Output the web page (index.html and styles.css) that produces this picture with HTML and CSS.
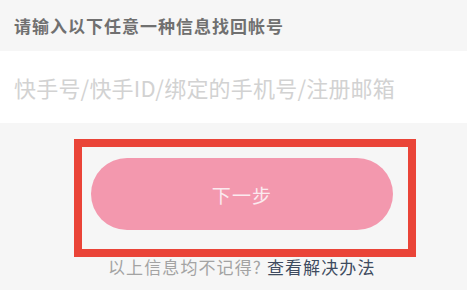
FILE: index.html
```html
<!DOCTYPE html>
<html lang="zh">
<head>
<meta charset="utf-8">
<link rel="stylesheet" href="styles.css">
</head>
<body>
<div class="header">请输入以下任意一种信息找回帐号</div>
<div class="field">快手号/快手ID/绑定的手机号/注册邮箱</div>
<div class="action">
  <div class="btn">下一步</div>
</div>
<div class="footer"><span class="muted">以上信息均不记得?</span> <span class="link">查看解决办法</span></div>
</body>
</html>
```

FILE: styles.css
```css
html, body {
  margin: 0;
  padding: 0;
}
body {
  background: #f6f6f6;
  font-family: "Noto Sans CJK SC", "Noto Sans", sans-serif;
  width: 467px;
  height: 290px;
  overflow: hidden;
}
.header {
  height: 51px;
  display: flex;
  align-items: center;
  padding-left: 14px;
  font-size: 17px;
  font-weight: 700;
  color: #707070;
  letter-spacing: 1px;
}
.field {
  height: 72px;
  background: #ffffff;
  display: flex;
  align-items: center;
  padding-left: 14px;
  font-size: 22px;
  letter-spacing: 0.2px;
  color: #d2d2d2;
}
.action {
  margin-top: 16px;
  margin-left: 74px;
  width: 342px;
  height: 118px;
  box-sizing: border-box;
  border: 8px solid #ea4438;
  padding: 11px 0 0 9px;
}
.btn {
  width: 302px;
  height: 72px;
  border-radius: 36px;
  background: #f398ae;
  color: #fbeaef;
  font-size: 19px;
  letter-spacing: 1.2px;
  display: flex;
  align-items: center;
  justify-content: center;
}
.footer {
  margin-left: 108px;
  line-height: 20px;
  font-size: 17px;
  letter-spacing: 1.1px;
}
.muted {
  color: #a3a3a3;
}
.link {
  color: #3e4b60;
}
```
